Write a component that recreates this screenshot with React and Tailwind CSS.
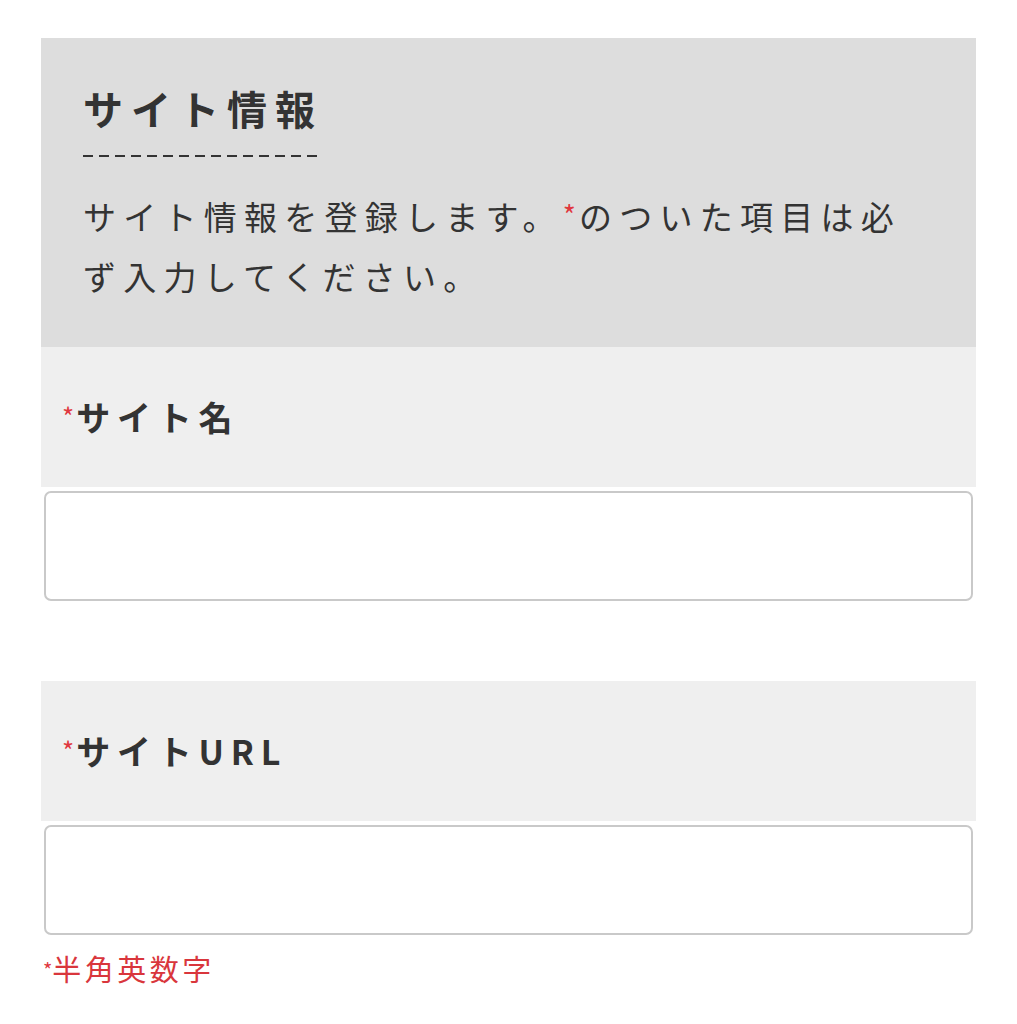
import React from 'react'

function Req({ className = '' }) {
    return <span className={`font-normal leading-none text-[#e0383e] ${className}`}>*</span>
}

function Field({ label }) {
    return (
        <div>
            <div className="flex h-[140px] items-center bg-[#efefef] pl-[21px]">
                <h3 className="text-[34px] font-bold leading-none tracking-[0.2em] text-[#333333]">
                    <Req className="relative top-[-4px] mr-[2px] text-[26px] tracking-normal" />
                    {label}
                </h3>
            </div>
            <input
                type="text"
                className="mx-[3px] mt-[4px] block h-[110px] w-[calc(100%-6px)] rounded-[7px] border-2 border-[#c9c9c9] bg-white px-4 text-[28px] outline-none"
            />
        </div>
    )
}

export default function App() {
    return (
        <main
            className="min-h-[1024px] bg-white px-[41px] pt-[38px] text-[#333333]"
            style={{ fontFamily: '"Noto Sans CJK JP", "Noto Sans", sans-serif' }}
        >
            <section className="bg-[#dddddd] px-[42px] pb-[41px] pt-[42px]">
                <div className="inline-block">
                    <h2 className="pb-[18px] text-[40px] font-bold leading-[57px] tracking-[0.2em]">サイト情報</h2>
                    <div className="h-[2px] w-full bg-[repeating-linear-gradient(90deg,#333333_0_10px,transparent_10px_16px)]" />
                </div>
                <p className="mt-[29px] text-[33px] leading-[60px] tracking-[0.22em]">
                    サイト情報を登録します。
                    <Req className="relative top-[-4px] mr-[3px] text-[28px] tracking-normal" />
                    のついた項目は必
                    <br />
                    ず入力してください。
                </p>
            </section>

            <Field label="サイト名" />
            <div className="h-[80px]" />
            <Field label="サイトURL" />
            <p className="mt-[13px] pl-[2px] text-[29px] leading-[40px] tracking-[0.12em] text-[#d9363c]">
                <Req className="relative top-[-3px] text-[20px] tracking-normal" />
                半角英数字
            </p>
        </main>
    )
}
